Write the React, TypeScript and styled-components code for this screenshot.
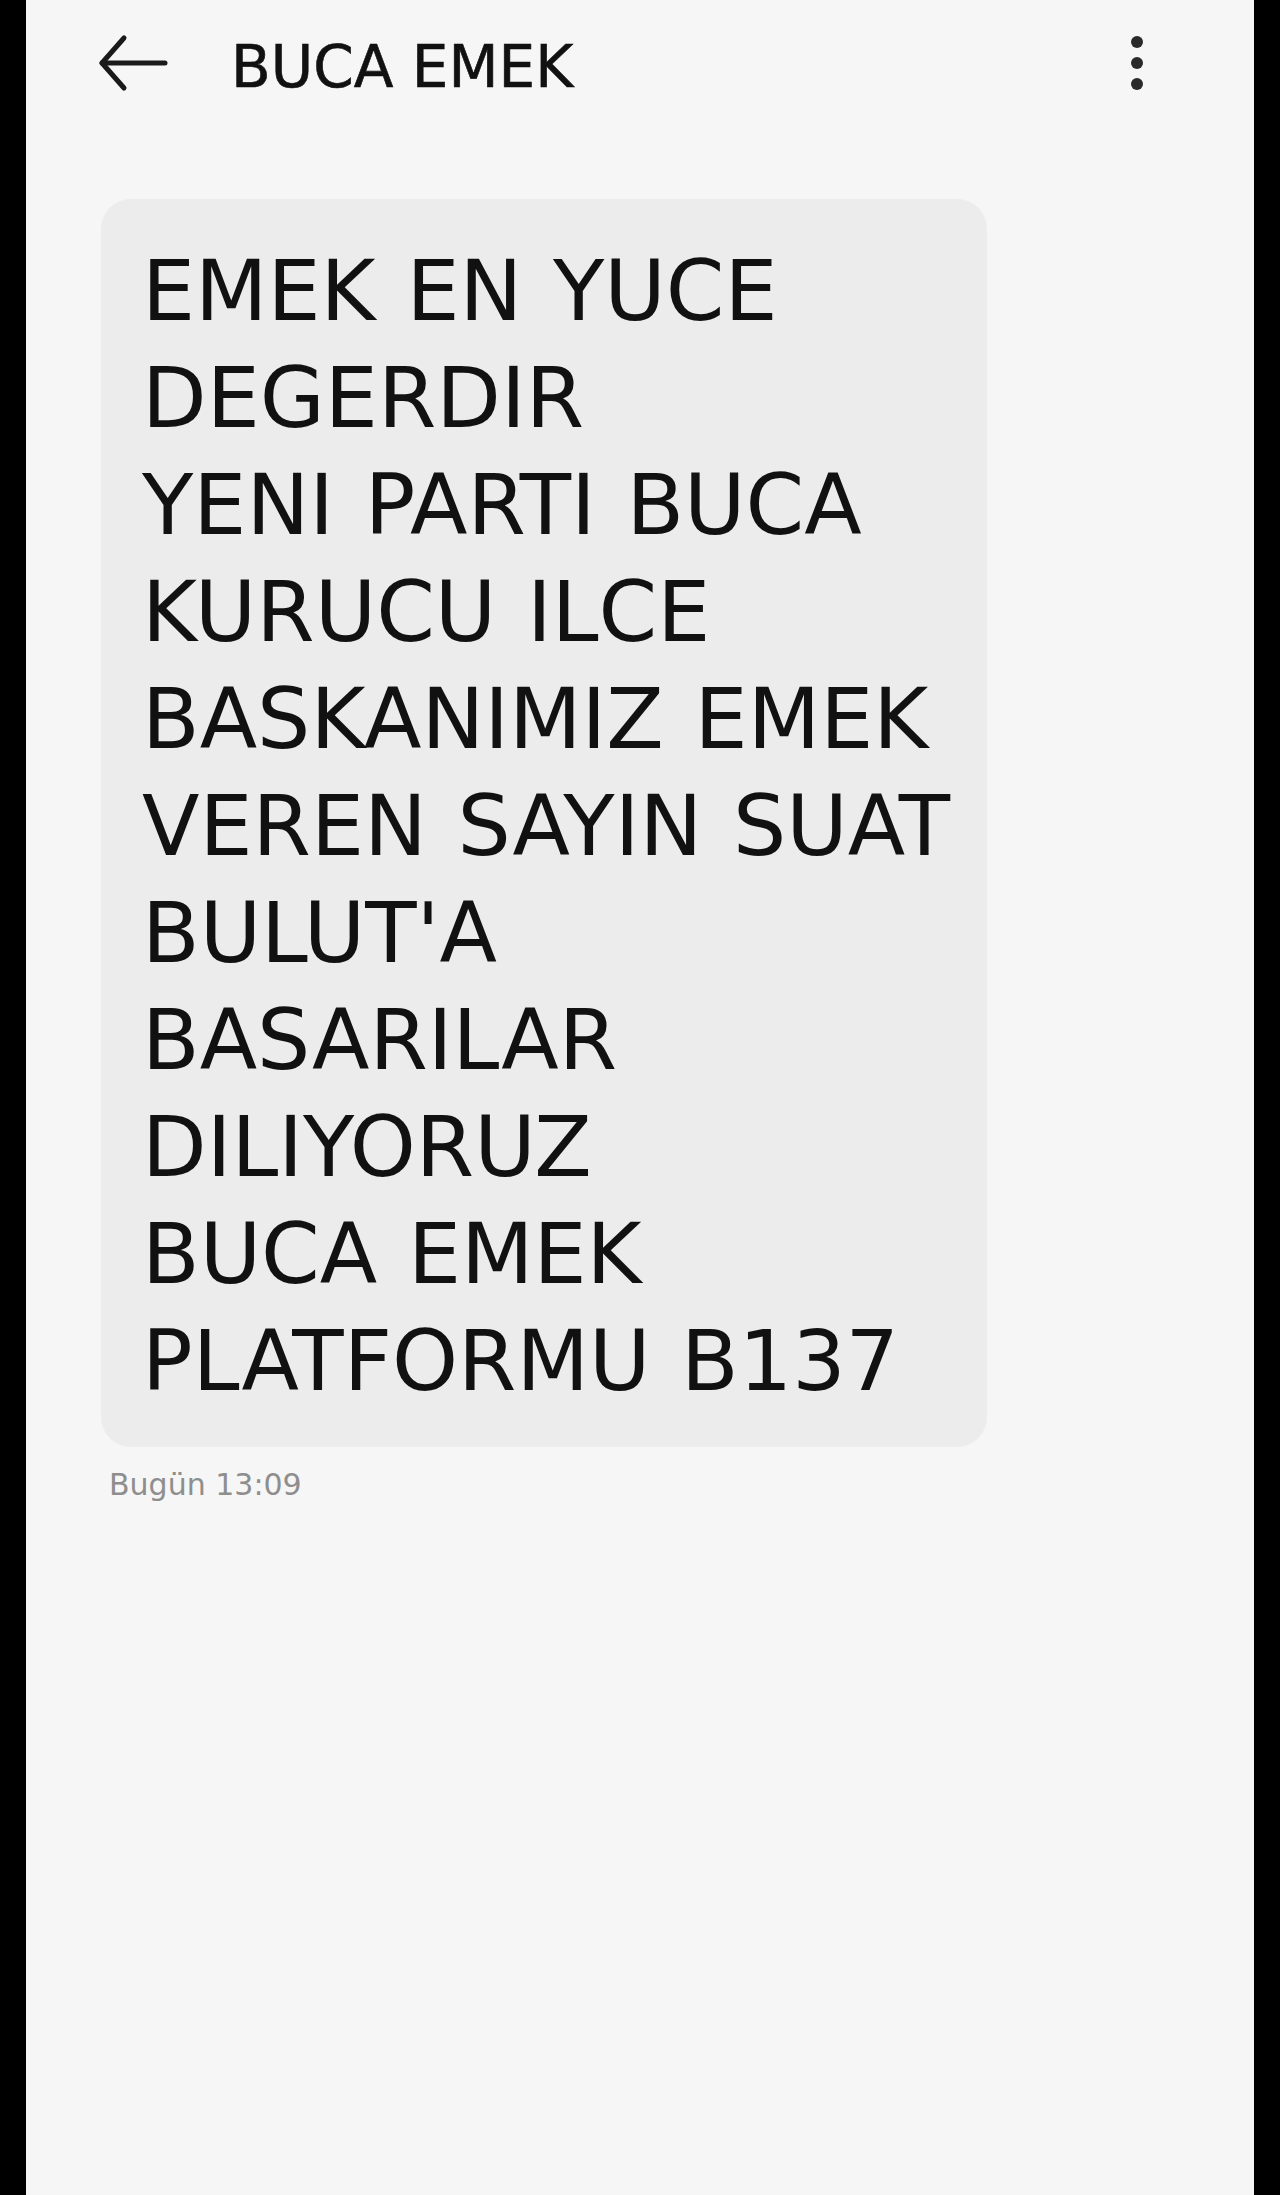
import styled, { createGlobalStyle } from 'styled-components'

const GlobalStyle = createGlobalStyle`
  html, body {
    margin: 0;
    padding: 0;
    background: #000;
  }
  #root {
    min-height: 2195px;
  }
`

const Screen = styled.div`
  margin: 0 26px;
  height: 2195px;
  background: #f6f6f6;
  font-family: "DejaVu Sans", "Liberation Sans", sans-serif;
  color: #111;
  display: flex;
  flex-direction: column;
`

const TopBar = styled.header`
  height: 126px;
  display: flex;
  align-items: center;
  padding: 0 105px 0 72px;
`

const BackButton = styled.button`
  border: none;
  background: none;
  padding: 0;
  display: flex;
  cursor: pointer;
`

const Title = styled.h1`
  flex: 1;
  margin: 0 0 0 63px;
  padding-top: 8px;
  font-size: 58px;
  font-weight: 400;
  white-space: nowrap;
  -webkit-text-stroke: 0.6px #111;
`

const MenuButton = styled.button`
  border: none;
  background: none;
  padding: 0;
  display: flex;
  cursor: pointer;
`

const Thread = styled.main`
  display: flex;
  flex-direction: column;
  align-items: flex-start;
  padding: 73px 0 0 75px;
`

const Bubble = styled.div`
  width: 886px;
  box-sizing: border-box;
  padding: 39px 20px 32px 41px;
  background: #ececec;
  border-radius: 30px;
`

const Line = styled.div`
  font-size: 84px;
  line-height: 107px;
  word-spacing: 4px;
  white-space: nowrap;
`

const Stamp = styled.span`
  margin: 20px 0 0 8px;
  font-size: 30px;
  color: #8e8e8e;
`

const lines = [
  'EMEK EN YUCE',
  'DEGERDIR',
  'YENI PARTI BUCA',
  'KURUCU ILCE',
  'BASKANIMIZ EMEK',
  'VEREN SAYIN SUAT',
  "BULUT'A",
  'BASARILAR',
  'DILIYORUZ',
  'BUCA EMEK',
  'PLATFORMU B137',
]

export default function App() {
  return (
    <>
      <GlobalStyle />
      <Screen>
        <TopBar>
          <BackButton aria-label="Geri">
            <svg width="70" height="60" viewBox="0 0 70 60" fill="none" stroke="#1a1a1a" strokeWidth="5" strokeLinecap="round" strokeLinejoin="round">
              <path d="M4 30 H67" />
              <path d="M26 5 L4 30 L26 55" />
            </svg>
          </BackButton>
          <Title>BUCA EMEK</Title>
          <MenuButton aria-label="Menü">
            <svg width="24" height="60" viewBox="0 0 24 60" fill="#2a2a2a">
              <circle cx="12" cy="9" r="6" />
              <circle cx="12" cy="30" r="6" />
              <circle cx="12" cy="51" r="6" />
            </svg>
          </MenuButton>
        </TopBar>
        <Thread>
          <Bubble>
            {lines.map((l) => (
              <Line key={l}>{l}</Line>
            ))}
          </Bubble>
          <Stamp>Bugün 13:09</Stamp>
        </Thread>
      </Screen>
    </>
  )
}
